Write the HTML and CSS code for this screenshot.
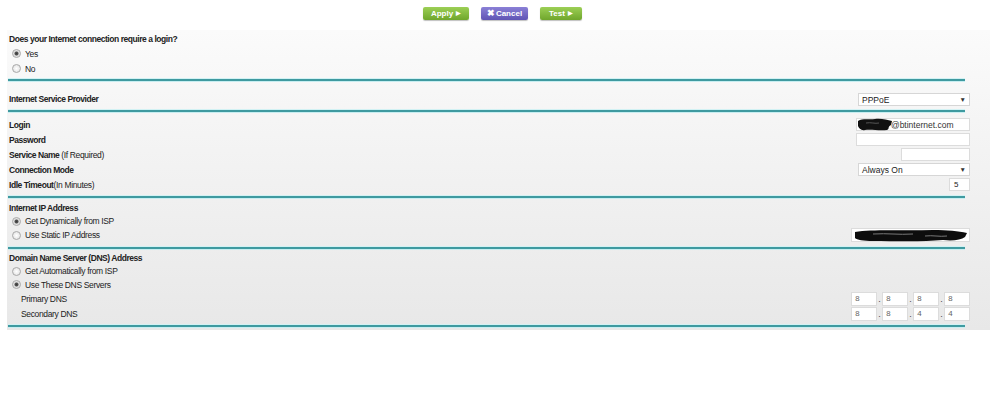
FILE: index.html
```html
<!DOCTYPE html>
<html lang="en">

<head>
    <meta charset="UTF-8">
    <meta name="viewport" content="width=device-width, initial-scale=1.0">
    <title>Basic Settings</title>
    <link rel="stylesheet" href="styles.css">
</head>

<body>
    <div class="toolbar">
        <button class="btn btn-go">Apply <span class="tri">&#9654;</span></button>
        <button class="btn btn-cancel"><span class="x">&#10006;</span>Cancel</button>
        <button class="btn btn-go">Test <span class="tri">&#9654;</span></button>
    </div>

    <div class="panel">
        <!-- login required? -->
        <div class="group g-login">
            <div class="row h15 label">Does your Internet connection require a login?</div>
            <div class="row h15 opt"><span class="radio on"></span>Yes</div>
            <div class="row h15 opt"><span class="radio"></span>No</div>
        </div>
        <div class="rule"></div>

        <!-- provider -->
        <div class="group g-isp">
            <div class="row h14">
                <span class="label">Internet Service Provider</span>
                <div class="select w112">PPPoE<span class="caret">&#9660;</span></div>
            </div>
        </div>
        <div class="rule"></div>

        <!-- account -->
        <div class="group g-account">
            <div class="row h15">
                <span class="label">Login</span>
                <div class="input w114 login">
                    <svg class="blot" width="36" height="13" viewBox="0 0 36 13">
                        <path d="M1 3 C6 0 12 2 18 1 C24 0 30 2 35 3 L34 7 C30 9 33 11 30 12 C22 13 14 11 8 12 C4 13 2 10 1 8 Z" fill="#111"/>
                        <path d="M9 5 C14 4 18 6 22 5" stroke="#555" stroke-width="1" fill="none"/>
                    </svg>
                    <span class="val">@btinternet.com</span>
                </div>
            </div>
            <div class="row h15">
                <span class="label">Password</span>
                <div class="input w114"></div>
            </div>
            <div class="row h15">
                <span class="label">Service Name <span class="plain">(If Required)</span></span>
                <div class="input w69"></div>
            </div>
            <div class="row h15">
                <span class="label">Connection Mode</span>
                <div class="select w112">Always On<span class="caret">&#9660;</span></div>
            </div>
            <div class="row h15">
                <span class="label">Idle Timeout<span class="plain">(In Minutes)</span></span>
                <div class="input w21 num">5</div>
            </div>
        </div>
        <div class="rule"></div>

        <!-- WAN address -->
        <div class="group g-ip">
            <div class="row h13 label">Internet IP Address</div>
            <div class="row h14 opt"><span class="radio on"></span>Get Dynamically from ISP</div>
            <div class="row h14">
                <span class="opt"><span class="radio"></span>Use Static IP Address</span>
                <div class="input w119">
                    <svg class="blot wide" width="116" height="13" viewBox="0 0 116 13">
                        <path d="M2 3 C20 0 50 2 80 1 C95 1 105 2 114 4 L112 8 C108 11 100 12 90 11 C70 13 40 12 20 12 C10 12 4 11 2 9 Z" fill="#0d0d0d"/>
                        <path d="M20 5 C35 4 45 6 60 5 M72 7 C80 6 86 8 94 7" stroke="#777" stroke-width="1" fill="none"/>
                    </svg>
                </div>
            </div>
        </div>
        <div class="rule"></div>

        <!-- DNS -->
        <div class="group g-dns">
            <div class="row h13 label">Domain Name Server (DNS) Address</div>
            <div class="row h14 opt"><span class="radio"></span>Get Automatically from ISP</div>
            <div class="row h13 opt"><span class="radio on"></span>Use These DNS Servers</div>
            <div class="row h15">
                <span class="sub">Primary DNS</span>
                <div class="quad">
                    <span class="octet">8</span><span class="dot">.</span>
                    <span class="octet">8</span><span class="dot">.</span>
                    <span class="octet">8</span><span class="dot">.</span>
                    <span class="octet">8</span>
                </div>
            </div>
            <div class="row h15">
                <span class="sub">Secondary DNS</span>
                <div class="quad">
                    <span class="octet">8</span><span class="dot">.</span>
                    <span class="octet">8</span><span class="dot">.</span>
                    <span class="octet">4</span><span class="dot">.</span>
                    <span class="octet">4</span>
                </div>
            </div>
        </div>
        <div class="rule"></div>
    </div>
</body>

</html>
```

FILE: styles.css
```css
body {
    margin: 0;
    font-family: "Liberation Sans", Arial, sans-serif;
    font-size: 8.5px;
    color: #222;
    background-color: #fff;
}

/* top buttons */
.toolbar {
    height: 30px;
    display: flex;
    justify-content: center;
    align-items: flex-start;
    gap: 12px;
    padding-left: 6px;
    padding-top: 7px;
    box-sizing: border-box;
}

.btn {
    height: 13px;
    padding: 0;
    border: none;
    border-radius: 2px;
    color: #fff;
    font-family: "Liberation Sans", Arial, sans-serif;
    font-size: 8px;
    font-weight: bold;
    line-height: 13px;
    display: flex;
    align-items: center;
    justify-content: center;
    box-shadow: 0 1px 1px rgba(0, 0, 0, 0.25);
}

.btn-go {
    width: 46px;
    background: linear-gradient(#9ccf55, #6fa62c);
}

.btn-go:last-child {
    width: 42px;
}

.btn-cancel {
    width: 47px;
    background: linear-gradient(#8a80d6, #5f54b4);
}

.tri {
    font-size: 6px;
    margin-left: 3px;
}

.x {
    font-size: 9px;
    margin-right: 1px;
}

/* settings panel */
.panel {
    margin-left: 7px;
    width: 983px;
    height: 300px;
    padding: 0 20px 0 2px;
    box-sizing: border-box;
    background: linear-gradient(#fbfbfb, #f3f3f3 40%, #e8e8e8);
}

.rule {
    height: 2px;
    margin: 0 5px 0 -1px;
    background-color: #3f9aa0;
    box-shadow: 0 -1px 0 #d2f2f4, 0 1px 0 #c8eef1;
}

.group {
    display: flex;
    flex-direction: column;
}

.g-login {
    padding: 1px 0 3px;
}

.g-isp {
    padding: 11px 0 4px;
}

.g-account {
    padding: 5px 0 4px;
}

.g-ip {
    padding: 3px 0 5px;
}

.g-dns {
    padding: 2px 0 4px;
}

.row {
    display: flex;
    align-items: center;
    justify-content: space-between;
}

.h13 {
    height: 13px;
}

.h14 {
    height: 14px;
}

.h15 {
    height: 15px;
}

.label {
    font-weight: bold;
    letter-spacing: -0.45px;
}

.plain {
    font-weight: normal;
    letter-spacing: -0.35px;
}

.opt {
    display: flex;
    align-items: center;
    justify-content: flex-start;
    letter-spacing: -0.35px;
}

.sub {
    letter-spacing: -0.35px;
    padding-left: 12px;
}

.radio {
    width: 7px;
    height: 7px;
    margin: 0 4px 0 3px;
    border: 1px solid #a9a9a9;
    border-radius: 50%;
    background: radial-gradient(#fff, #ddd);
    flex: none;
}

.radio.on {
    background: radial-gradient(#3a3a3a 0, #555 1.6px, #dcdcdc 2.4px, #f4f4f4);
}

/* form fields */
.input,
.select {
    height: 13px;
    box-sizing: border-box;
    background-color: #fff;
    border: 1px solid #dcdcdc;
    position: relative;
    font-size: 8.5px;
    line-height: 12px;
}

.select {
    padding-left: 3px;
    border-color: #d6d6d6;
}

.caret {
    position: absolute;
    right: 3px;
    top: 0;
    font-size: 6.5px;
    color: #333;
}

.w112 {
    width: 112px;
}

.w114 {
    width: 114px;
}

.w69 {
    width: 69px;
}

.w21 {
    width: 21px;
}

.w119 {
    width: 119px;
    height: 14px;
}

.num {
    padding-left: 4px;
    font-size: 8px;
}

.login {
    display: flex;
    align-items: center;
}

.login .val {
    margin-left: -2px;
    color: #333;
}

.blot {
    flex: none;
}

.blot.wide {
    position: absolute;
    left: 1px;
    top: 0;
}

/* dotted quad for DNS */
.quad {
    width: 119px;
    display: flex;
    align-items: center;
    justify-content: space-between;
}

.octet {
    width: 26px;
    height: 14px;
    box-sizing: border-box;
    border: 1px solid #dcdcdc;
    background-color: #fff;
    padding-left: 3px;
    font-family: "Liberation Mono", monospace;
    font-size: 8px;
    line-height: 12px;
    color: #666;
}

.dot {
    font-size: 9px;
    color: #444;
    width: 5px;
    text-align: center;
}
```
